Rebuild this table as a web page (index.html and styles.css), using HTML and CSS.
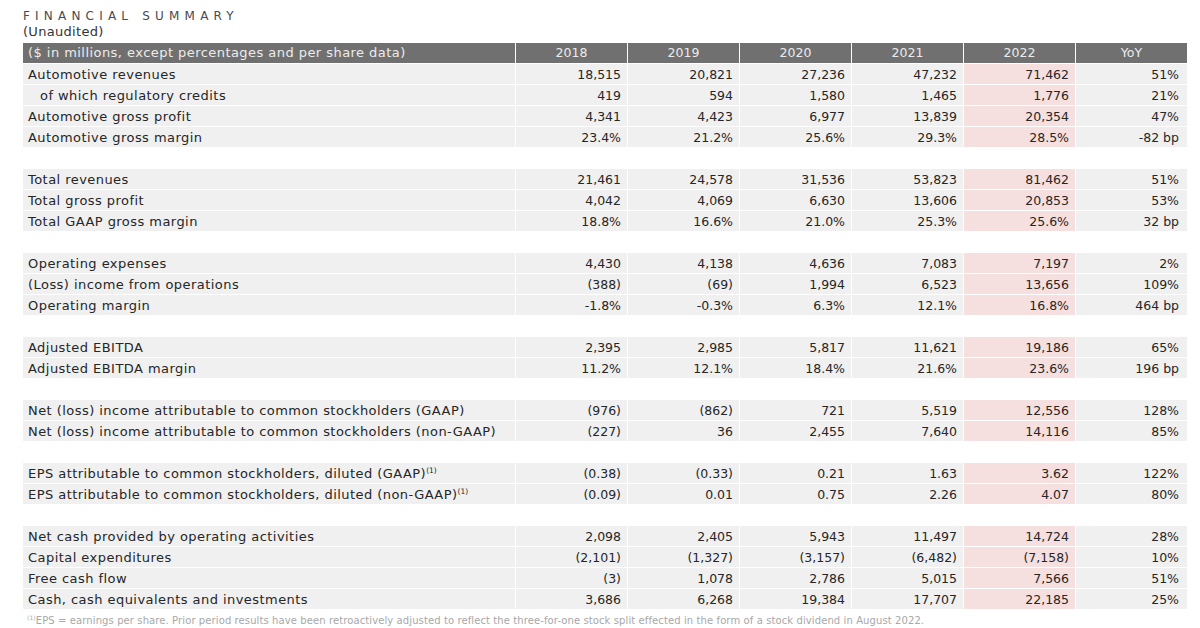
FILE: index.html
```html
<!DOCTYPE html>
<html>
<head>
<meta charset="utf-8">
<link rel="stylesheet" href="styles.css">
</head>
<body>
<div class="page">
  <h1 class="title">FINANCIAL SUMMARY</h1>
  <div class="subtitle">(Unaudited)</div>
  <table class="fin">
    <colgroup>
      <col class="c-label"><col class="c-num"><col class="c-num"><col class="c-num"><col class="c-num"><col class="c-num"><col class="c-yoy">
    </colgroup>
    <thead>
      <tr><th class="lbl">($ in millions, except percentages and per share data)</th><th>2018</th><th>2019</th><th>2020</th><th>2021</th><th>2022</th><th>YoY</th></tr>
    </thead>
    <tbody>
      <tr><td class="lbl">Automotive revenues</td><td>18,515</td><td>20,821</td><td>27,236</td><td>47,232</td><td class="hl">71,462</td><td class="yoy">51%</td></tr>
      <tr><td class="lbl indent">of which regulatory credits</td><td>419</td><td>594</td><td>1,580</td><td>1,465</td><td class="hl">1,776</td><td class="yoy">21%</td></tr>
      <tr><td class="lbl">Automotive gross profit</td><td>4,341</td><td>4,423</td><td>6,977</td><td>13,839</td><td class="hl">20,354</td><td class="yoy">47%</td></tr>
      <tr><td class="lbl">Automotive gross margin</td><td>23.4%</td><td>21.2%</td><td>25.6%</td><td>29.3%</td><td class="hl">28.5%</td><td class="yoy">-82 bp</td></tr>
      <tr class="spacer"><td colspan="7"></td></tr>
      <tr><td class="lbl">Total revenues</td><td>21,461</td><td>24,578</td><td>31,536</td><td>53,823</td><td class="hl">81,462</td><td class="yoy">51%</td></tr>
      <tr><td class="lbl">Total gross profit</td><td>4,042</td><td>4,069</td><td>6,630</td><td>13,606</td><td class="hl">20,853</td><td class="yoy">53%</td></tr>
      <tr><td class="lbl">Total GAAP gross margin</td><td>18.8%</td><td>16.6%</td><td>21.0%</td><td>25.3%</td><td class="hl">25.6%</td><td class="yoy">32 bp</td></tr>
      <tr class="spacer"><td colspan="7"></td></tr>
      <tr><td class="lbl">Operating expenses</td><td>4,430</td><td>4,138</td><td>4,636</td><td>7,083</td><td class="hl">7,197</td><td class="yoy">2%</td></tr>
      <tr><td class="lbl">(Loss) income from operations</td><td>(388)</td><td>(69)</td><td>1,994</td><td>6,523</td><td class="hl">13,656</td><td class="yoy">109%</td></tr>
      <tr><td class="lbl">Operating margin</td><td>-1.8%</td><td>-0.3%</td><td>6.3%</td><td>12.1%</td><td class="hl">16.8%</td><td class="yoy">464 bp</td></tr>
      <tr class="spacer"><td colspan="7"></td></tr>
      <tr><td class="lbl">Adjusted EBITDA</td><td>2,395</td><td>2,985</td><td>5,817</td><td>11,621</td><td class="hl">19,186</td><td class="yoy">65%</td></tr>
      <tr><td class="lbl">Adjusted EBITDA margin</td><td>11.2%</td><td>12.1%</td><td>18.4%</td><td>21.6%</td><td class="hl">23.6%</td><td class="yoy">196 bp</td></tr>
      <tr class="spacer"><td colspan="7"></td></tr>
      <tr><td class="lbl">Net (loss) income attributable to common stockholders (GAAP)</td><td>(976)</td><td>(862)</td><td>721</td><td>5,519</td><td class="hl">12,556</td><td class="yoy">128%</td></tr>
      <tr><td class="lbl">Net (loss) income attributable to common stockholders (non-GAAP)</td><td>(227)</td><td>36</td><td>2,455</td><td>7,640</td><td class="hl">14,116</td><td class="yoy">85%</td></tr>
      <tr class="spacer"><td colspan="7"></td></tr>
      <tr><td class="lbl">EPS attributable to common stockholders, diluted (GAAP)<sup>(1)</sup></td><td>(0.38)</td><td>(0.33)</td><td>0.21</td><td>1.63</td><td class="hl">3.62</td><td class="yoy">122%</td></tr>
      <tr><td class="lbl">EPS attributable to common stockholders, diluted (non-GAAP)<sup>(1)</sup></td><td>(0.09)</td><td>0.01</td><td>0.75</td><td>2.26</td><td class="hl">4.07</td><td class="yoy">80%</td></tr>
      <tr class="spacer"><td colspan="7"></td></tr>
      <tr><td class="lbl">Net cash provided by operating activities</td><td>2,098</td><td>2,405</td><td>5,943</td><td>11,497</td><td class="hl">14,724</td><td class="yoy">28%</td></tr>
      <tr><td class="lbl">Capital expenditures</td><td>(2,101)</td><td>(1,327)</td><td>(3,157)</td><td>(6,482)</td><td class="hl">(7,158)</td><td class="yoy">10%</td></tr>
      <tr><td class="lbl">Free cash flow</td><td>(3)</td><td>1,078</td><td>2,786</td><td>5,015</td><td class="hl">7,566</td><td class="yoy">51%</td></tr>
      <tr><td class="lbl">Cash, cash equivalents and investments</td><td>3,686</td><td>6,268</td><td>19,384</td><td>17,707</td><td class="hl">22,185</td><td class="yoy">25%</td></tr>
    </tbody>
  </table>
  <p class="footnote"><sup>(1)</sup>EPS = earnings per share. Prior period results have been retroactively adjusted to reflect the three-for-one stock split effected in the form of a stock dividend in August 2022.</p>
</div>
</body>
</html>
```

FILE: styles.css
```css
html, body {
  margin: 0;
  padding: 0;
  background: #ffffff;
}

.page {
  padding: 9px 0 0 23px;
  font-family: "DejaVu Sans", "Liberation Sans", sans-serif;
  color: #262626;
}

.title {
  margin: 0;
  font-size: 12px;
  font-weight: 400;
  letter-spacing: 5.2px;
  line-height: 15px;
  color: #4a4a4a;
}

.subtitle {
  font-size: 13px;
  line-height: 16px;
  letter-spacing: 0.3px;
  color: #333333;
}

.fin {
  border-collapse: separate;
  border-spacing: 1px;
  table-layout: fixed;
  width: 1165px;
  margin-left: -1px;
  margin-top: 2px;
  font-size: 12.5px;
}

.c-label { width: 492px; }
.c-num { width: 111px; }
.c-yoy { width: 111px; }

.fin th {
  background: #707070;
  color: #ececec;
  font-weight: 400;
  height: 20px;
  padding: 0;
  text-align: center;
  line-height: 20px;
}

.fin th.lbl,
.fin td.lbl {
  text-align: left;
  padding-left: 5px;
  font-size: 13px;
  letter-spacing: 0.45px;
}

.fin td {
  background: #f0f0f0;
  height: 19px;
  padding: 1px 6px 0 0;
  text-align: right;
  line-height: 19px;
  white-space: nowrap;
}

.fin td.yoy {
  padding-right: 8px;
}

.fin td.indent {
  padding-left: 17px;
}

.fin td.hl {
  background: #f6dfdf;
}

.fin tr.spacer td {
  background: transparent;
  height: 20px;
  padding: 0;
}

.fin sup {
  font-size: 7.5px;
  letter-spacing: 0;
  line-height: 0;
  vertical-align: 5px;
}

.footnote {
  margin: 5px 0 0 4px;
  font-size: 10px;
  letter-spacing: 0.1px;
  line-height: 12px;
  color: #a8a8a8;
}

.footnote sup {
  font-size: 6px;
  line-height: 0;
  vertical-align: 4px;
}
```
